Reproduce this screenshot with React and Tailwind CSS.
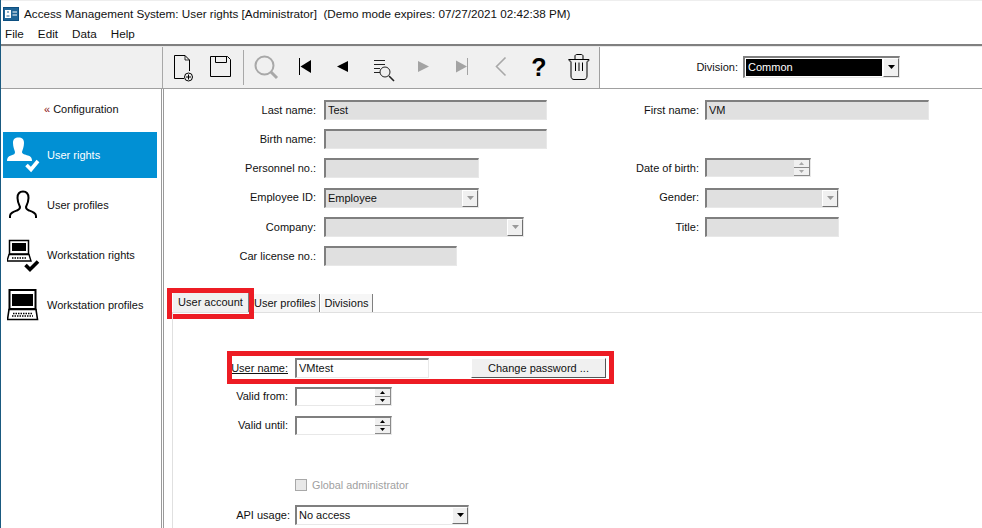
const UI = { fontFamily: '"Liberation Sans", Arial, sans-serif' };

function Field({ className = "", disabled = true, children }) {
  return (
    <div className={`flex h-[20px] items-center border-t-2 border-l-2 border-[#7f7f7f] border-r border-b border-r-[#e8e8e8] border-b-[#e8e8e8] pl-[2px] ${disabled ? "bg-[#e0e0e0]" : "bg-white"} ${className}`}>
      <span className="flex-1 truncate leading-none text-[#111]">{children}</span>
    </div>
  );
}

function ArrowBtn({ disabled }) {
  return (
    <div className="flex h-full w-[16px] items-center justify-center border-t border-l border-white border-r border-b border-r-[#6f6f6f] border-b-[#6f6f6f] bg-[#f0f0f0]">
      <svg width="9" height="5" viewBox="0 0 9 5"><path d="M1 0h7L4.5 4z" fill={disabled ? "#9a9a9a" : "#000"} /></svg>
    </div>
  );
}

function Combo({ className = "", disabled = true, children }) {
  return (
    <div className={`flex h-[20px] items-stretch border-t-2 border-l-2 border-[#7f7f7f] border-r border-b border-r-[#e8e8e8] border-b-[#e8e8e8] ${disabled ? "bg-[#e0e0e0]" : "bg-white"} ${className}`}>
      <span className="flex flex-1 items-center pl-[2px] leading-none text-[#111]">{children}</span>
      <ArrowBtn disabled={disabled} />
    </div>
  );
}

function Spin({ className = "", disabled = false }) {
  const c = disabled ? "#a8a8a8" : "#000";
  const Part = ({ d }) => (
    <div className="flex h-[8px] w-[16px] items-center justify-center border-b border-r border-[#8a8a8a] bg-[#f0f0f0]">
      <svg width="5" height="3" viewBox="0 0 5 3"><path d={d} fill={c} /></svg>
    </div>
  );
  return (
    <div className={`flex h-[19px] justify-end border-t-2 border-l-2 border-[#7f7f7f] border-r border-b border-r-[#e8e8e8] border-b-[#e8e8e8] ${disabled ? "bg-[#e0e0e0]" : "bg-white"} ${className}`}>
      <div className="flex flex-col">
        <Part d="M2.5 0L5 3H0z" />
        <Part d="M0 0h5L2.5 3z" />
      </div>
    </div>
  );
}

function Label({ children }) {
  return <div className="self-center pr-[8px] text-right text-[#111]">{children}</div>;
}

function RightLabel({ children }) {
  return <div className="self-center pr-[6px] text-right text-[#111]">{children}</div>;
}

function Ico({ w, children, className = "" }) {
  return (
    <svg width={w} height="40" viewBox={`0 0 ${w} 40`} fill="none" className={`block shrink-0 ${className}`}>
      {children}
    </svg>
  );
}

function Toolbar() {
  return (
    <div className="flex h-[42px] border-b border-[#a0a0a0]">
      <div className="w-[162px] shrink-0 border-r border-[#a8a8a8] bg-[#f0f0f0]" />
      <div className="flex h-[41px] w-[437px] shrink-0 items-start border-r border-[#a0a0a0] bg-[#f0f0f0]">
        <Ico w={20} className="ml-[11px]">
          <path d="M.5 31.5V8.5H11L15.5 13V24M.5 31.5H10" stroke="#000" />
          <path d="M11 8.5V13H15.5" stroke="#000" strokeWidth=".8" />
          <circle cx="14.5" cy="30" r="4" stroke="#000" />
          <path d="M12 30h5M14.5 27.5v5" stroke="#000" />
        </Ico>
        <Ico w={22} className="ml-[16px]">
          <path d="M.5 9.5H17.5L20.5 12.5V29.5H.5Z" stroke="#000" />
          <path d="M5.5 9.5V15.5H16.5V9.5" stroke="#000" />
        </Ico>
        <div className="ml-[11px] mt-[3px] h-[35px] w-px bg-[#a8a8a8]" />
        <Ico w={26} className="ml-[10px]">
          <circle cx="10.5" cy="18.5" r="9" stroke="#a8a8a8" strokeWidth="2" />
          <path d="M17 25L23 31" stroke="#a8a8a8" strokeWidth="3" />
        </Ico>
        <Ico w={13} className="ml-[19px]">
          <path d="M.5 11V28" stroke="#000" />
          <path d="M1.5 19.5L12 13V26Z" fill="#000" />
        </Ico>
        <Ico w={12} className="ml-[25px]">
          <path d="M0 19.5L11 14V25Z" fill="#000" />
        </Ico>
        <Ico w={22} className="ml-[24px]">
          <path d="M1 13.5H12M1 17.5H12M1 21.5H7M1 25.5H7" stroke="#222" />
          <circle cx="12" cy="25" r="5" stroke="#222" />
          <path d="M16 29L21 34" stroke="#222" strokeWidth="1.6" />
        </Ico>
        <Ico w={11} className="ml-[23px]">
          <path d="M11 19.5L0 14V25Z" fill="#a3a3a3" />
        </Ico>
        <Ico w={13} className="ml-[27px]">
          <path d="M11 19.5L0 13.5V25.5Z" fill="#a3a3a3" />
          <path d="M11.5 11V28" stroke="#a3a3a3" />
        </Ico>
        <Ico w={12} className="ml-[26px]">
          <path d="M10.5 10.5L1.5 19.5L10.5 28.5" stroke="#a8a8a8" strokeWidth="1.6" />
        </Ico>
        <div className="ml-[24px] flex h-[40px] w-[16px] items-center justify-center text-[25px] font-bold leading-none text-black">?</div>
        <Ico w={22} className="ml-[21px]">
          <path d="M.5 12.5H21M7 12V9C7 8 8 7.5 9 7.5H13C14 7.5 15 8 15 9V12" stroke="#000" />
          <path d="M1 12.5C.8 15 2.5 13.5 3 14.5V29C3 31.5 4.5 32.5 6 32.5H16C17.5 32.5 19 31.5 19 29V14.5C19.5 13.5 21.2 15 21 12.5" stroke="#000" />
          <path d="M7.5 15.5V24M11 15.5V24M14.5 15.5V24" stroke="#000" />
        </Ico>
      </div>
      <div className="flex flex-1 items-start bg-white pt-[9px]">
        <div className="mt-[3px] w-[138px] text-right text-[#111]">Division:</div>
        <div className="ml-[5px] flex h-[22px] w-[157px] items-stretch border-t-2 border-l-2 border-[#7f7f7f] border-r border-b border-r-[#e8e8e8] border-b-[#e8e8e8] bg-white">
          <span className="mx-[1px] my-[1px] flex flex-1 items-center bg-black pl-[2px] leading-none text-white">Common</span>
          <ArrowBtn />
        </div>
      </div>
    </div>
  );
}

function UserRightsIcon() {
  return (
    <svg width="34" height="42" viewBox="0 0 34 42" className="shrink-0">
      <path d="M6 9C6 5 8 3.5 11.5 3.5S17 5 17 9C17 13 15.5 16 15 18C15 20 18 20.5 21 21.5C24 22.5 25 24 25 27H0C0 24 1 22.5 4 21.5C7 20.5 8 20 8 18C7.5 16 6 13 6 9Z" fill="#fff" />
      <path d="M19.5 31L24 35.5L31 27" stroke="#0190d4" strokeWidth="7" fill="none" />
      <path d="M19.5 31L24 35.5L31 27" stroke="#fff" strokeWidth="3.6" fill="none" />
    </svg>
  );
}

function UserProfileIcon() {
  return (
    <svg width="34" height="42" viewBox="0 0 34 42" className="shrink-0">
      <path d="M3 34V32C3 29 6 28 10 26.5C12.5 25.5 13 24.5 13 23C11.5 20 10.5 17 10.5 14C10.5 10 12.5 7.5 16 7.5S21.5 10 21.5 14C21.5 17 20.5 20 19 23C19 24.5 19.5 25.5 22 26.5C26 28 29 29 29 32V34" stroke="#000" strokeWidth="2" fill="none" />
    </svg>
  );
}

function LaptopCheckIcon() {
  return (
    <svg width="34" height="42" viewBox="0 0 34 42" className="shrink-0">
      <path d="M2.5 6.5H21.5V20H2.5Z" fill="#fff" stroke="#000" strokeWidth="1.5" />
      <path d="M5 9H19V17H5Z" fill="#000" />
      <path d="M2 20.5H22L24 27H0Z" fill="#fff" stroke="#000" strokeWidth="1.4" />
      <path d="M5 24H19" stroke="#000" strokeDasharray="1.5 1" strokeWidth="1.6" />
      <path d="M18.5 31L23 35.5L31 27.5" stroke="#000" strokeWidth="3.6" fill="none" />
    </svg>
  );
}

function LaptopIcon() {
  return (
    <svg width="34" height="42" viewBox="0 0 34 42" className="shrink-0">
      <path d="M2.5 6H28.5V25H2.5Z" fill="#fff" stroke="#000" strokeWidth="2" />
      <path d="M5 10H26V22H5Z" fill="#000" />
      <path d="M2 25.5H29L30.5 35.5H.5Z" fill="#fff" stroke="#000" strokeWidth="1.6" />
      <path d="M6 29.5H25M5 32H26" stroke="#000" strokeDasharray="1.5 1" strokeWidth="1.4" />
    </svg>
  );
}

function NavItem({ icon, label, active }) {
  return (
    <div className={`mb-[4px] ml-[2px] flex h-[46px] w-[154px] items-center gap-[6px] pl-[4px] ${active ? "bg-[#0190d4] text-white" : "text-[#111]"}`}>
      {icon}
      <span>{label}</span>
    </div>
  );
}

function Sidebar() {
  return (
    <div className="w-[163px] shrink-0 border-r-[3px] border-double border-[#9a9a9a]">
      <div className="flex h-[43px] items-center pb-[2px] pl-[43px] text-[#111]">
        <span className="mr-[3px] text-[#8a1010]">«</span>Configuration
      </div>
      <NavItem active icon={<UserRightsIcon />} label="User rights" />
      <NavItem icon={<UserProfileIcon />} label="User profiles" />
      <NavItem icon={<LaptopCheckIcon />} label="Workstation rights" />
      <NavItem icon={<LaptopIcon />} label="Workstation profiles" />
    </div>
  );
}

function PersonalForm() {
  return (
    <div className="grid grid-cols-[160px_224px_157px_300px] gap-y-[9.2px] pt-[11px]">
      <Label>Last name:</Label>
      <Field className="w-[223px]">Test</Field>
      <RightLabel>First name:</RightLabel>
      <Field className="w-[224px]">VM</Field>

      <Label>Birth name:</Label>
      <Field className="w-[223px]" />
      <div />
      <div />

      <Label>Personnel no.:</Label>
      <Field className="w-[155px]" />
      <RightLabel>Date of birth:</RightLabel>
      <Spin disabled className="w-[106px]" />

      <Label>Employee ID:</Label>
      <Combo className="w-[155px]">Employee</Combo>
      <RightLabel>Gender:</RightLabel>
      <Combo className="w-[134px]" />

      <Label>Company:</Label>
      <Combo className="w-[200px]" />
      <RightLabel>Title:</RightLabel>
      <Field className="w-[134px]" />

      <Label>Car license no.:</Label>
      <Field className="w-[133px]" />
    </div>
  );
}

function Tabs() {
  return (
    <div className="relative mt-[27px] ml-[8px] flex h-[20px] items-end border-b border-[#e0e0e0]">
      <div className="flex h-[20px] w-[77px] items-center justify-center border-t border-l border-white border-r border-r-[#808080] bg-[#f0f0f0] pb-[1px] text-[#111]">User account</div>
      <div className="ml-[4px] flex h-[18px] w-[67px] items-center border-r border-r-[#808080] bg-[#f6f6f6] pl-[1px] pt-[1px] text-[#111]">User profiles</div>
      <div className="ml-[1px] flex h-[18px] w-[52px] items-center justify-center border-r border-r-[#808080] bg-[#f6f6f6] pt-[1px] text-[#111]">Divisions</div>
      <div className="pointer-events-none absolute -top-[5px] -left-[5px] h-[31px] w-[87px] border-[5px] border-[#ed1c24]" />
    </div>
  );
}

function AccountPanel() {
  return (
    <div className="relative ml-[8px] h-[215px] border-l border-[#e0e0e0] pt-[45px]">
      <div className="relative flex h-[20px] items-start">
        <div className="w-[115px] pt-[2px] text-right text-[#111] underline">User name:</div>
        <Field disabled={false} className="ml-[7px] w-[134px]">VMtest</Field>
        <div className="ml-[42px] flex h-[20px] w-[135px] items-center justify-center border-t border-l border-white border-r border-b border-r-[#555] border-b-[#555] bg-[#f0f0f0] text-[#111]">Change password ...</div>
        <div className="pointer-events-none absolute -top-[7px] left-[54px] h-[33px] w-[387px] border-[5px] border-[#ed1c24]" />
      </div>
      <div className="mt-[9px] flex items-center">
        <div className="w-[115px] text-right text-[#111]">Valid from:</div>
        <Spin className="ml-[7px] w-[97px]" />
      </div>
      <div className="mt-[10px] flex items-center">
        <div className="w-[115px] text-right text-[#111]">Valid until:</div>
        <Spin className="ml-[7px] w-[97px]" />
      </div>
      <div className="mt-[44px] ml-[122px] flex h-[12px] items-center gap-[5px] text-[10.8px] text-[#a0a0a0]">
        <div className="h-[12px] w-[12px] border border-[#a8a8a8] bg-[#e8e8e8]" />
        <span>Global administrator</span>
      </div>
      <div className="mt-[14px] flex items-center">
        <div className="w-[117px] text-right text-[#111]">API usage:</div>
        <Combo disabled={false} className="ml-[5px] w-[174px]">No access</Combo>
      </div>
    </div>
  );
}

export default function App() {
  return (
    <div style={UI} className="h-[528px] w-[982px] overflow-hidden border-l border-[#1a5a80] bg-white text-[11px]">
      <div className="flex h-[24px] items-center border-t border-[#eeeeee] pl-[2px]">
        <svg width="16" height="14" viewBox="0 0 16 14" className="mt-[3px] shrink-0">
          <rect x=".5" y=".5" width="15" height="13" fill="#1f6496" stroke="#0d4f80" />
          <rect x="2" y="3" width="6" height="8" fill="#fff" />
          <path d="M4 5h2M3.5 9h3" stroke="#1f6496" />
          <path d="M9.5 5h4.5M9.5 8h4.5" stroke="#fff" strokeWidth="1.2" />
        </svg>
        <span className="ml-[5px] mt-[3px] text-[11.7px] text-[#111]">Access Management System: User rights [Administrator]&nbsp; (Demo mode expires: 07/27/2021 02:42:38 PM)</span>
      </div>
      <div className="flex h-[20px] items-center gap-[14px] pl-[4px] text-[11.7px] text-[#111]">
        <span>File</span>
        <span>Edit</span>
        <span>Data</span>
        <span>Help</span>
      </div>
      <div className="h-[3px] border-t-2 border-b border-t-[#808080] border-b-[#e8e8e8]" />
      <Toolbar />
      <div className="flex">
        <Sidebar />
        <div className="min-w-0 flex-1">
          <PersonalForm />
          <Tabs />
          <AccountPanel />
        </div>
      </div>
    </div>
  );
}
